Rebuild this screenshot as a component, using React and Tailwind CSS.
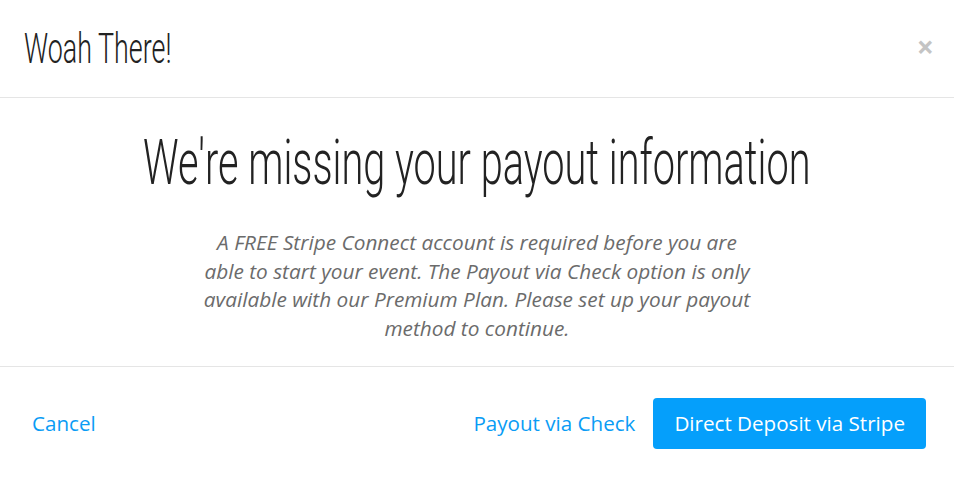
import React from "react";

// no condensed face installed, so squeeze Roboto Light horizontally
const HEAD = { fontFamily: 'Roboto, "Liberation Sans", sans-serif' };
const BODY = { fontFamily: '"Open Sans", "Noto Sans", sans-serif' };

export default function App() {
  return (
    <div className="w-[954px] h-[480px] bg-white overflow-hidden" style={BODY}>
      <div className="h-[98px] flex items-center justify-between pl-6 pr-5 border-b border-[#e5e5e5]">
        <h2 className="inline-block origin-left scale-x-[0.64] text-[42px] font-light text-[#222] leading-none" style={HEAD}>
          Woah There!
        </h2>
        <button className="text-[#c4c4c4] text-[30px] font-bold leading-none pb-1">×</button>
      </div>

      <div className="h-[269px] flex flex-col items-center border-b border-[#e5e5e5]">
        <h1 className="mt-[31px] inline-block whitespace-nowrap scale-x-[0.63] text-[63px] leading-[68px] font-light text-[#222]" style={HEAD}>
          We're missing your payout information
        </h1>
        <p className="mt-[31px] w-[556px] text-center italic text-[20.8px] leading-[28.5px] text-[#6b6b6b]">
          A FREE Stripe Connect account is required before you are able to start your event. The Payout via Check option is only available with our Premium Plan. Please set up your payout method to continue.
        </p>
      </div>

      <div className="h-[112px] flex items-center justify-between pl-8 pr-7">
        <button className="text-[20.6px] text-[#0a9cf5]">Cancel</button>
        <div className="flex items-center gap-[18px]">
          <button className="text-[20.6px] text-[#0a9cf5]">Payout via Check</button>
          <button className="h-[51px] px-[21px] rounded-[4px] bg-[#059ffb] text-white text-[20.6px]">
            Direct Deposit via Stripe
          </button>
        </div>
      </div>
    </div>
  );
}
